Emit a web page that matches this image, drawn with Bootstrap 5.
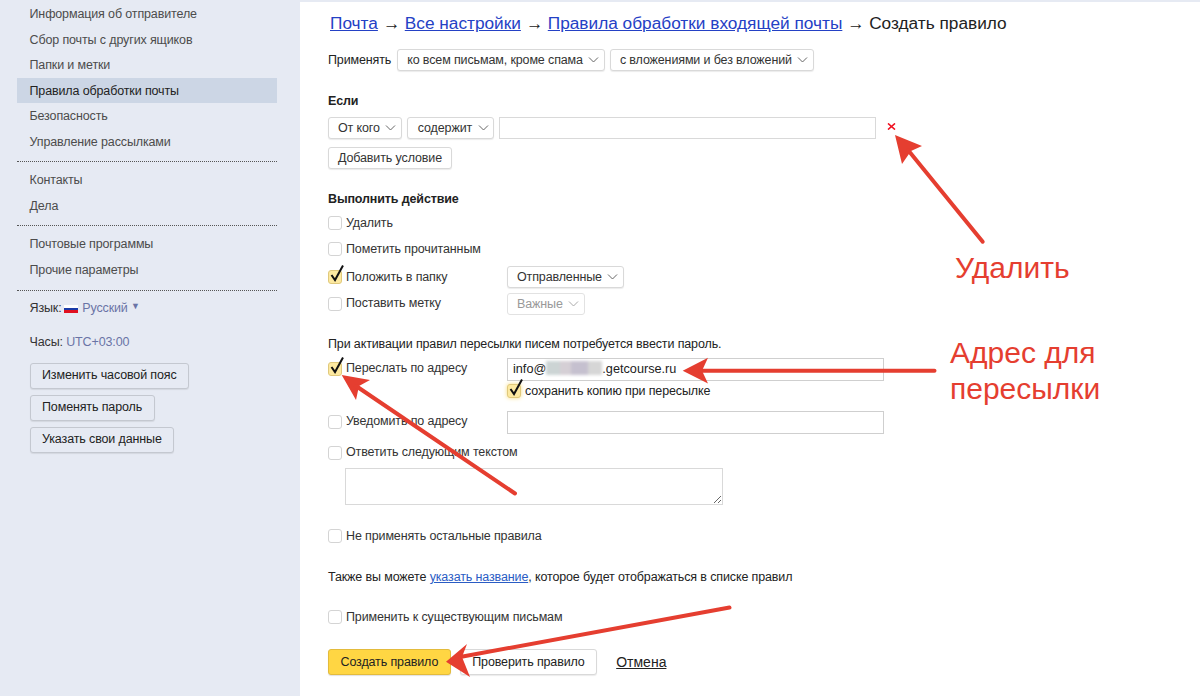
<!DOCTYPE html>
<html lang="ru">
<head>
<meta charset="utf-8">
<title>Создать правило</title>
<link href="https://cdn.jsdelivr.net/npm/bootstrap@5.3.0/dist/css/bootstrap.min.css" rel="stylesheet">
<style>
html,body{height:696px;overflow:hidden}
body{font:12.5px/15px "Liberation Sans",Arial,sans-serif;letter-spacing:-.13px;background:#e6eaf3;color:#222}
.shell{height:696px;position:relative}
.side{width:300px;flex:none;padding-top:1px}
.side-nav{margin:0 23px 0 17px}
.side-nav a{display:block;height:25.5px;line-height:27.5px;padding-left:12.5px;color:#4c4c4c;text-decoration:none}
.side-nav a.on{background:#ccd6e5;color:#222}
.dots{border-top:1px dotted #555;margin:7px 0 5px}
.dots.wide{margin:7.5px 0 5.5px}
.side-info{padding-left:29.5px;color:#333}
.side-info a{color:#6a74a6;text-decoration:none}
.lang-row{margin-top:8.5px}
.clock-row{margin-top:18.5px;margin-bottom:13px}
.flag{display:inline-block;width:14px;height:8px;margin:0 1px 0 -1px;vertical-align:-1px;background:linear-gradient(#fff 0 33%,#1a3ba8 33% 66%,#e01020 66%)}
.caret-s{font-size:9px;vertical-align:3px;color:#6a74a6}
.main{flex:1;background:#fff;margin-top:2px;padding:12px 0 0 28px;position:relative}
.crumbs{font-size:17.25px;line-height:19px;margin-left:2px;color:#222;letter-spacing:0}
.crumbs a{color:#2441c5}
.yb.btn{font-size:12.5px;line-height:15px;padding:0 9px;height:22px;border:1px solid #d9d9d9;border-radius:3px;background:#fff;color:#333;display:inline-flex;align-items:center;gap:5.5px;box-shadow:0 1px 1px rgba(0,0,0,.08);letter-spacing:-.13px}
.yb.dd.btn{padding:0 4.5px 0 9px}
.yb.dd.pad-l.btn{padding-left:10px}
.yb.off{color:#999;border-color:#e2e2e2;box-shadow:none;opacity:1}
.yb svg{width:11px;height:6px;flex:none}
.side .yb.btn{height:26px;padding:0 11.5px;border:1px solid #c4c8d0;background:#e6eaf3;color:#222;margin-bottom:6px;display:flex;width:max-content}
.fld.form-control{font-size:12.7px;line-height:15px;letter-spacing:0;border:1px solid #d9d9d9;border-radius:0;height:22px;padding:2px 5px;color:#222;box-shadow:none}
.fld-wide{width:377px}
.fld-addr.form-control{height:23px;border-color:#cfcfcf}
.hd{font-weight:700;color:#222}
.rw{display:flex;align-items:center}
.lbl{width:179px;flex:none;display:flex;align-items:center;gap:4px;color:#333}
.cb{position:relative;width:14px;height:14px;flex:none;display:block}
.cb input.form-check-input{display:block;width:14px;height:14px;margin:0;border:1px solid #d4d4d4;border-radius:3px;background:#fff;box-shadow:none}
.cb.chk input.form-check-input{background:#fde9a0;border-color:#e0c97c}
.cb.chk.glow input.form-check-input{box-shadow:0 0 4px #f7dc7d}
.cb svg{position:absolute;left:0;top:-5px;width:16px;height:18px}
.blurred{display:inline-block;width:56px;height:14px;vertical-align:-2px;filter:blur(1.5px);background:linear-gradient(90deg,#ccd4d4 0 25%,#d5cfd5 25% 45%,#c5c0cf 45% 75%,#d6d6d6 75%)}
.ta.form-control{width:378px;height:37px;margin-left:17px;border:1px solid #d9d9d9;border-radius:0;min-height:0;box-shadow:none;font-size:13px}
.ylw.btn{height:26px;padding:0 11.5px;font-size:12.5px;line-height:15px;letter-spacing:-.13px;background:#ffd643;border:1px solid #e3bb3c;border-radius:3px;color:#222;box-shadow:0 1px 1px rgba(0,0,0,.12)}
.wht.btn{height:26px;padding:0 11.5px;margin-left:9px;font-size:12.5px;line-height:15px;letter-spacing:-.13px;background:#fff;border:1px solid #d9d9d9;border-radius:3px;color:#222;box-shadow:0 1px 1px rgba(0,0,0,.08)}
.cancel{font-size:14px;letter-spacing:0;color:#222;margin-left:19px}
.lnk{color:#2a5cc4}
.x-del{width:9px;height:7px;margin-left:6px;margin-top:-4px;flex:none}
.marks{position:absolute;left:0;top:0;width:1200px;height:696px;pointer-events:none}
.note{position:absolute;color:#e53e30;font-size:30px;line-height:36px;letter-spacing:0}
.note-del{left:955px;top:250px}
.note-addr{left:950px;top:335px}
.r-apply{margin-top:16px;gap:6px}
.r-if{margin-top:23px}
.r-cond{margin-top:8px;gap:5px}
.r-add{margin-top:8px}
.r-act{margin-top:23px}
.r-del{margin-top:7px;height:18px}
.r-read{margin-top:8px;height:18px}
.r-folder{margin-top:8px;height:22px}
.r-tag{margin-top:5px;height:22px}
.r-tag .lbl{margin-top:-1px}
.r-note{margin-top:22px}
.r-fwd{margin-top:6px;height:23px;align-items:flex-start}
.r-fwd .lbl{margin-top:3px}
.r-copy{margin-top:1px;margin-left:179px;height:18px;gap:4px}
.r-notify{margin-top:11px;height:23px;align-items:flex-start}
.r-notify .lbl{margin-top:3px}
.r-reply{margin-top:10px;height:17px}
.r-ta{margin-top:7px}
.r-stop{margin-top:22px;height:18px}
.r-name{margin-top:25px}
.r-exist{margin-top:23px;height:18px}
.r-btns{margin-top:23px}
.auto{width:auto}
.btn-gap{margin-left:-1px}
</style>
</head>
<body>
<div class="shell d-flex">
  <aside class="side">
    <nav class="side-nav">
      <a href="#">Информация об отправителе</a>
      <a href="#">Сбор почты с других ящиков</a>
      <a href="#">Папки и метки</a>
      <a href="#" class="on">Правила обработки почты</a>
      <a href="#">Безопасность</a>
      <a href="#">Управление рассылками</a>
      <div class="dots"></div>
      <a href="#">Контакты</a>
      <a href="#">Дела</a>
      <div class="dots"></div>
      <a href="#">Почтовые программы</a>
      <a href="#">Прочие параметры</a>
      <div class="dots wide"></div>
    </nav>
    <div class="side-info">
      <div class="lang-row">Язык: <span class="flag"></span> <a href="#">Русский</a> <span class="caret-s">▼</span></div>
      <div class="clock-row">Часы: <a href="#">UTC+03:00</a></div>
      <button type="button" class="btn yb">Изменить часовой пояс</button>
      <button type="button" class="btn yb">Поменять пароль</button>
      <button type="button" class="btn yb">Указать свои данные</button>
    </div>
  </aside>
  <main class="main">
    <div class="crumbs"><a href="#">Почта</a> → <a href="#">Все настройки</a> → <a href="#">Правила обработки входящей почты</a> → Создать правило</div>
    <div class="rw r-apply">
      <span>Применять</span>
      <button type="button" class="btn yb dd">ко всем письмам, кроме спама <svg viewBox="0 0 11 6"><path d="M1 .5l4.500 4.500L10 .5" fill="none" stroke="#666"/></svg></button>
      <button type="button" class="btn yb dd btn-gap">с вложениями и без вложений <svg viewBox="0 0 11 6"><path d="M1 .5l4.500 4.500L10 .5" fill="none" stroke="#666"/></svg></button>
    </div>
    <div class="hd r-if">Если</div>
    <div class="rw r-cond">
      <button type="button" class="btn yb dd">От кого <svg viewBox="0 0 11 6"><path d="M1 .5l4.500 4.500L10 .5" fill="none" stroke="#666"/></svg></button>
      <button type="button" class="btn yb dd pad-l">содержит <svg viewBox="0 0 11 6"><path d="M1 .5l4.500 4.500L10 .5" fill="none" stroke="#666"/></svg></button>
      <input type="text" class="form-control fld fld-wide" aria-label="Условие">
      <svg class="x-del" viewBox="0 0 10 8"><path d="M1 .5l8 7M9 .5l-8 7" stroke="#f01020" stroke-width="1.800"/></svg>
    </div>
    <div class="r-add"><button type="button" class="btn yb">Добавить условие</button></div>
    <div class="hd r-act">Выполнить действие</div>
    <div class="rw r-del"><label class="lbl"><span class="cb"><input class="form-check-input" type="checkbox"></span>Удалить</label></div>
    <div class="rw r-read"><label class="lbl"><span class="cb"><input class="form-check-input" type="checkbox"></span>Пометить прочитанным</label></div>
    <div class="rw r-folder"><label class="lbl"><span class="cb chk"><input class="form-check-input" type="checkbox" checked><svg viewBox="0 0 16 18"><path d="M3.500 10l3.500 5L15 .5" fill="none" stroke="#111" stroke-width="2"/></svg></span>Положить в папку</label><button type="button" class="btn yb dd">Отправленные <svg viewBox="0 0 11 6"><path d="M1 .5l4.500 4.500L10 .5" fill="none" stroke="#666"/></svg></button></div>
    <div class="rw r-tag"><label class="lbl"><span class="cb"><input class="form-check-input" type="checkbox"></span>Поставить метку</label><button type="button" class="btn yb dd off">Важные <svg viewBox="0 0 11 6"><path d="M1 .5l4.500 4.500L10 .5" fill="none" stroke="#aaa"/></svg></button></div>
    <div class="r-note">При активации правил пересылки писем потребуется ввести пароль.</div>
    <div class="rw r-fwd"><label class="lbl"><span class="cb chk"><input class="form-check-input" type="checkbox" checked><svg viewBox="0 0 16 18"><path d="M3.500 10l3.500 5L15 .5" fill="none" stroke="#111" stroke-width="2"/></svg></span>Переслать по адресу</label><div class="form-control fld fld-wide fld-addr">info@<span class="blurred"></span>.getcourse.ru</div></div>
    <div class="rw r-copy"><label class="d-flex align-items-center gap-1"><span class="cb chk glow"><input class="form-check-input" type="checkbox" checked><svg viewBox="0 0 16 18"><path d="M3.500 10l3.500 5L15 .5" fill="none" stroke="#111" stroke-width="2"/></svg></span>сохранить копию при пересылке</label></div>
    <div class="rw r-notify"><label class="lbl"><span class="cb"><input class="form-check-input" type="checkbox"></span>Уведомить по адресу</label><input type="text" class="form-control fld fld-wide fld-addr" aria-label="Адрес"></div>
    <div class="rw r-reply"><label class="lbl auto"><span class="cb"><input class="form-check-input" type="checkbox"></span>Ответить следующим текстом</label></div>
    <textarea class="form-control ta r-ta" aria-label="Текст"></textarea>
    <div class="rw r-stop"><label class="lbl auto"><span class="cb"><input class="form-check-input" type="checkbox"></span>Не применять остальные правила</label></div>
    <div class="r-name">Также вы можете <a href="#" class="lnk">указать название</a>, которое будет отображаться в списке правил</div>
    <div class="rw r-exist"><label class="lbl auto"><span class="cb"><input class="form-check-input" type="checkbox"></span>Применить к существующим письмам</label></div>
    <div class="rw r-btns">
      <button type="button" class="btn ylw">Создать правило</button>
      <button type="button" class="btn wht">Проверить правило</button>
      <a href="#" class="cancel">Отмена</a>
    </div>
  </main>
  <svg class="marks" viewBox="0 0 1200 696" aria-hidden="true">
    <g fill="#e53e30" stroke="none">
      <path d="M895 135L922 146 911 151 902 164Z"/>
      <path d="M682.700 370.700L708 357.700 702 370.700 708 383.500Z"/>
      <path d="M341.700 375L370 380 359 386 356 400Z"/>
      <path d="M446 661.700L467 644 462 657 470 677Z"/>
    </g>
    <g stroke="#e53e30" stroke-width="4" stroke-linecap="round" fill="none">
      <path d="M982.700 241.700L908 150"/>
      <path d="M934.500 370.700H700"/>
      <path d="M515 493.500L356 386"/>
      <path d="M729.500 607.500L460 657"/>
    </g>
  </svg>
  <div class="note note-del">Удалить</div>
  <div class="note note-addr">Адрес для<br>пересылки</div>
</div>
<script src="https://cdn.jsdelivr.net/npm/bootstrap@5.3.0/dist/js/bootstrap.bundle.min.js"></script>
</body>
</html>
